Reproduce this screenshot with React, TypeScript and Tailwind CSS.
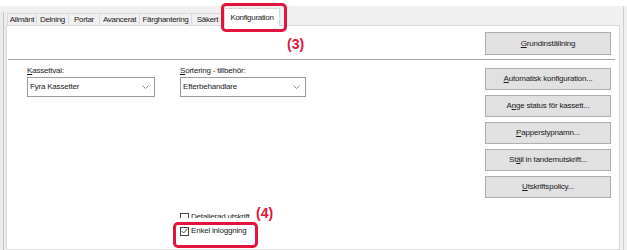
import type { ReactNode } from "react";

const FONT = { fontFamily: '"Liberation Sans", Arial, sans-serif' };

const tabs = [
  { label: "Allmänt", w: "w-[30px]" },
  { label: "Delning", w: "w-[32px]" },
  { label: "Portar", w: "w-[31px]" },
  { label: "Avancerat", w: "w-[40px]" },
  { label: "Färghantering", w: "w-[52px]" },
  { label: "Säkert", w: "w-[32px]" },
];

function Btn({ children }: { children: ReactNode }) {
  return (
    <div className="flex h-[22px] w-[126px] items-center justify-center border border-[#adadad] bg-[#e1e1e1] text-[8px] tracking-[-0.2px] text-[#1a1a1a]">
      {children}
    </div>
  );
}

function Select({ value, w }: { value: string; w: string }) {
  return (
    <div className={`flex h-[20px] ${w} items-center justify-between border border-[#9a9a9a] bg-white pl-[2px] pr-[5px] text-[8px] tracking-[-0.2px] text-[#1a1a1a]`}>
      <span>{value}</span>
      <svg width="7" height="4" viewBox="0 0 7 4" fill="none">
        <path d="M0.5 0.5 L3.5 3.5 L6.5 0.5" stroke="#707070" strokeWidth="0.8" />
      </svg>
    </div>
  );
}

function Check({ checked }: { checked?: boolean }) {
  return (
    <div className="flex h-[9px] w-[9px] shrink-0 items-center justify-center border border-[#444] bg-white">
      {checked && (
        <svg width="7" height="6" viewBox="0 0 7 6" fill="none">
          <path d="M0.6 3 L2.6 5 L6.4 0.8" stroke="#333" strokeWidth="0.9" />
        </svg>
      )}
    </div>
  );
}

export default function App() {
  return (
    <div className="relative h-[250px] w-[627px] overflow-hidden bg-white" style={FONT}>
      <div className="flex h-full flex-col">
        <div className="h-[6px] bg-white" />
        <div className="flex flex-1 bg-[#f0f0f0]">
          {/* left window edge */}
          <div className="mt-[6px] flex w-[6px] justify-center bg-[#ececec]">
            <div className="w-[1px] bg-[#c4c4c4]" />
          </div>

          <div className="flex flex-1 flex-col">
            {/* tab strip */}
            <div className="flex h-[19px] items-end pl-[1px]">
              {tabs.map((t) => (
                <div
                  key={t.label}
                  className={`flex h-[12px] ${t.w} items-center justify-center border-t border-r border-[#d9d9d9] bg-[#f0f0f0] text-[8px] tracking-[-0.3px] text-[#1a1a1a] first:border-l`}
                >
                  {t.label}
                </div>
              ))}
              <div className="relative z-10 -mb-[1px] flex h-[18px] w-[56px] items-center justify-center border border-b-0 border-[#d9d9d9] bg-white text-[8px] tracking-[-0.3px] text-[#1a1a1a]">
                Konfiguration
              </div>
            </div>

            {/* panel */}
            <div className="flex flex-1 flex-col border border-[#d9d9d9] bg-white">
              <div className="flex justify-end pt-[6px] pr-[8px]">
                <div className="flex h-[23px] w-[126px] items-center justify-center border border-[#adadad] bg-[#e1e1e1] text-[8px] tracking-[-0.2px] text-[#1a1a1a]">
                  <span className="underline">G</span>rundinställning
                </div>
              </div>
              <div className="mt-[4px] ml-[1px] mr-[4px] h-[1px] bg-[#a0a0a0]" />

              <div className="flex flex-1">
                {/* left column */}
                <div className="flex flex-1 pl-[20px] pt-[6px]">
                  <div className="flex w-[128px] flex-col">
                    <div className="h-[10px] text-[8px] leading-[10px] tracking-[-0.2px] text-[#1a1a1a]">
                      <span className="underline">K</span>assettval:
                    </div>
                    <div className="mt-[1px]">
                      <Select value="Fyra Kassetter" w="w-[128px]" />
                    </div>
                  </div>
                  <div className="ml-[25px] flex w-[126px] flex-col">
                    <div className="h-[10px] text-[8px] leading-[10px] tracking-[-0.2px] text-[#1a1a1a]">
                      <span className="underline">S</span>ortering - tillbehör:
                    </div>
                    <div className="mt-[1px]">
                      <Select value="Efterbehandlare" w="w-[126px]" />
                    </div>
                    <div className="mt-[115px] h-[6px] overflow-hidden">
                      <div className="flex items-center gap-[2px]">
                        <Check />
                        <span className="text-[8px] leading-[10px] tracking-[-0.2px] text-[#1a1a1a]">Detaljerad utskrift</span>
                      </div>
                    </div>
                    <div className="mt-[7px] flex h-[12px] items-center gap-[2px]">
                      <Check checked />
                      <span className="text-[8px] tracking-[-0.2px] text-[#1a1a1a]">Enkel inloggning</span>
                    </div>
                  </div>
                </div>

                {/* right column of buttons */}
                <div className="flex flex-col gap-[5px] pt-[8px] pr-[8px]">
                  <Btn>
                    <span className="underline">A</span>utomatisk konfiguration...
                  </Btn>
                  <Btn>
                    A<span className="underline">n</span>ge status för kassett...
                  </Btn>
                  <Btn>
                    <span className="underline">P</span>apperstypnamn...
                  </Btn>
                  <Btn>
                    St<span className="underline">ä</span>ll in tandemutskrift...
                  </Btn>
                  <Btn>
                    <span className="underline">U</span>tskriftspolicy...
                  </Btn>
                </div>
              </div>
            </div>
          </div>

          {/* right window edge */}
          <div className="flex w-[7px] justify-center bg-[#f0f0f0]">
            <div className="w-[1px] bg-[#cfcfcf]" />
          </div>
        </div>
      </div>

      {/* annotations */}
      <div className="absolute left-[221px] top-[3px] h-[29px] w-[66px] rounded-[5px] border-[3px] border-[#e0143c]" />
      <div className="absolute left-[287px] top-[34px] text-[14px] font-bold text-[#e0143c]">(3)</div>
      <div className="absolute left-[173px] top-[222px] h-[26px] w-[85px] rounded-[5px] border-[3px] border-[#e0143c]" />
      <div className="absolute left-[256px] top-[203px] text-[14px] font-bold text-[#e0143c]">(4)</div>
    </div>
  );
}
